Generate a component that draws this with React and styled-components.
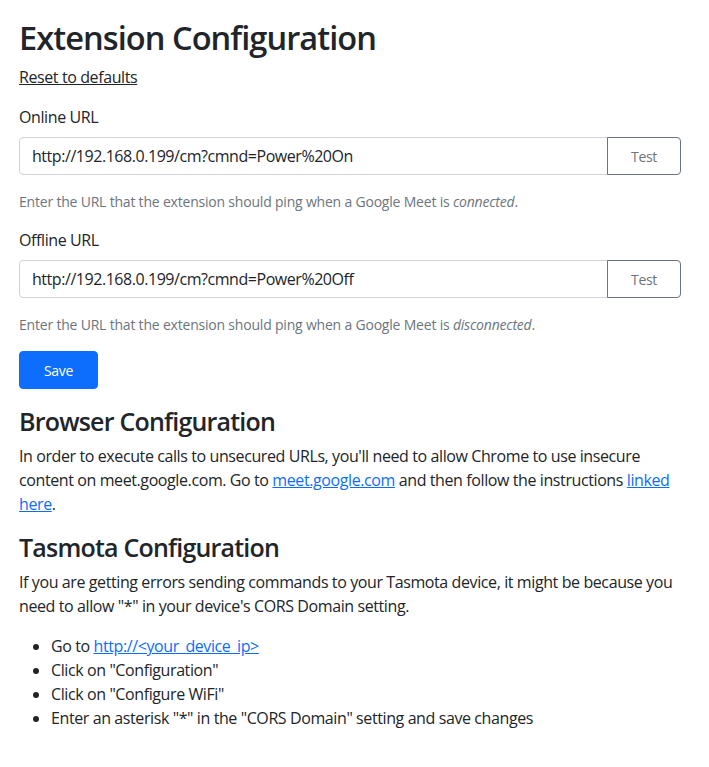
import React from "react";
import styled, { createGlobalStyle } from "styled-components";

const Global = createGlobalStyle`
  * { box-sizing: border-box; }
  html, body { margin: 0; padding: 0; background: #fff; }
  body {
    font-family: "Segoe UI", "Open Sans", "Noto Sans", sans-serif;
    font-size: 16px;
    line-height: 1.5;
    letter-spacing: -0.4px;
    color: #212529;
  }
`;

const Page = styled.div`
  padding: 18px 28px 40px 19px;
  width: 709px;
`;

const Title = styled.h1`
  margin: 0 0 8px;
  font-size: 32.6px;
  font-weight: 600;
  line-height: 1.2;
  letter-spacing: -0.95px;
`;

const Heading = styled.h3`
  margin: 0 0 8px;
  font-size: 25px;
  font-weight: 600;
  line-height: 1.2;
  letter-spacing: -0.8px;
`;

const Para = styled.p`
  margin: 0 0 16px;
`;

const ResetLink = styled.a`
  color: #212529;
  text-decoration: underline;
  cursor: pointer;
`;

const Link = styled.a`
  color: #0d6efd;
  text-decoration: underline;
`;

const Field = styled.div`
  margin-bottom: 16px;
`;

const Label = styled.label`
  display: block;
  margin-bottom: 8px;
`;

const InputGroup = styled.div`
  display: flex;
  margin-bottom: 16px;
`;

const Input = styled.input`
  flex: 1;
  height: 38px;
  padding: 6px 12px;
  font: inherit;
  letter-spacing: -0.45px;
  color: #212529;
  border: 1px solid #ced4da;
  border-radius: 4px 0 0 4px;
  outline: none;
`;

const TestButton = styled.button`
  width: 74px;
  height: 38px;
  margin-left: -1px;
  font-family: inherit;
  font-size: 14px;
  letter-spacing: -0.3px;
  color: #6c757d;
  background: transparent;
  border: 1px solid #6c757d;
  border-radius: 0 4px 4px 0;
`;

const Help = styled.div`
  font-size: 14px;
  line-height: 1.5;
  letter-spacing: -0.2px;
  color: #6c757d;
`;

const SaveButton = styled.button`
  display: block;
  width: 79px;
  height: 38px;
  margin-bottom: 17px;
  font-family: inherit;
  font-size: 14px;
  letter-spacing: -0.3px;
  color: #fff;
  background: #0d6efd;
  border: 1px solid #0d6efd;
  border-radius: 4px;
`;

const List = styled.ul`
  margin: 0 0 16px;
  padding-left: 32px;
`;

export default function App() {
  return (
    <Page>
      <Global />
      <Title>Extension Configuration</Title>
      <Para>
        <ResetLink>Reset to defaults</ResetLink>
      </Para>

      <Field>
        <Label>Online URL</Label>
        <InputGroup>
          <Input defaultValue="http://192.168.0.199/cm?cmnd=Power%20On" />
          <TestButton>Test</TestButton>
        </InputGroup>
        <Help>
          Enter the URL that the extension should ping when a Google Meet is <em>connected</em>.
        </Help>
      </Field>

      <Field>
        <Label>Offline URL</Label>
        <InputGroup>
          <Input defaultValue="http://192.168.0.199/cm?cmnd=Power%20Off" />
          <TestButton>Test</TestButton>
        </InputGroup>
        <Help>
          Enter the URL that the extension should ping when a Google Meet is <em>disconnected</em>.
        </Help>
      </Field>

      <SaveButton>Save</SaveButton>

      <Heading>Browser Configuration</Heading>
      <Para>
        In order to execute calls to unsecured URLs, you'll need to allow Chrome to use insecure
        content on meet.google.com. Go to <Link href="#">meet.google.com</Link> and then follow the
        instructions <Link href="#">linked here</Link>.
      </Para>

      <Heading>Tasmota Configuration</Heading>
      <Para>
        If you are getting errors sending commands to your Tasmota device, it might be because you
        need to allow "*" in your device's CORS Domain setting.
      </Para>
      <List>
        <li>
          Go to <Link href="#">http://&lt;your_device_ip&gt;</Link>
        </li>
        <li>Click on "Configuration"</li>
        <li>Click on "Configure WiFi"</li>
        <li>Enter an asterisk "*" in the "CORS Domain" setting and save changes</li>
      </List>
    </Page>
  );
}
